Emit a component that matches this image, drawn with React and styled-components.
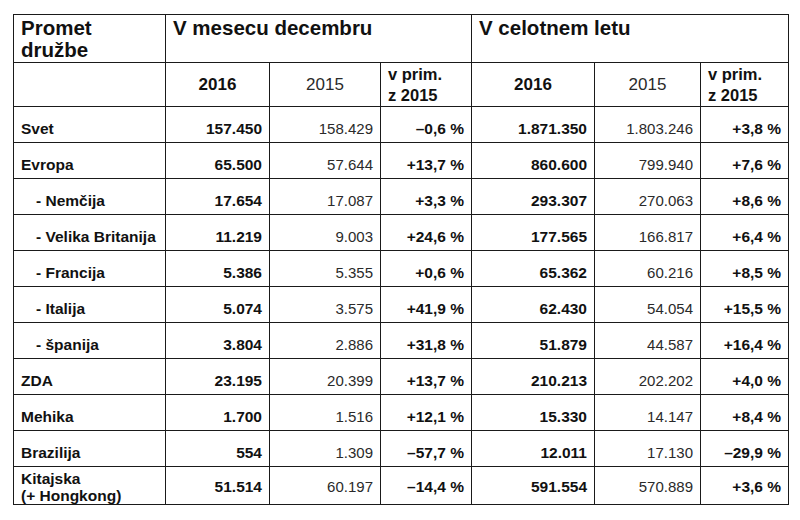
import React from 'react';
import styled, { createGlobalStyle } from 'styled-components';

const GlobalStyle = createGlobalStyle`
  html, body {
    margin: 0;
    background: #ffffff;
  }
  body {
    font-family: 'Liberation Sans', Arial, sans-serif;
    color: #111111;
  }
`;

const Page = styled.div`
  width: 800px;
  height: 520px;
  padding: 14px 0 0 13px;
  box-sizing: border-box;
`;

const Table = styled.table`
  width: 775px;
  border-collapse: collapse;
  table-layout: fixed;
  border: 1.5px solid #1a1a1a;
`;

const Cell = styled.td`
  border: 1px solid #1a1a1a;
  padding: ${({ $tight }) => ($tight ? '2px 7px 0 7px' : '8px 7px 0 7px')};
  padding-left: ${({ $indent }) => ($indent ? '22px' : '7px')};
  text-align: ${({ $align }) => $align || 'right'};
  vertical-align: middle;
  font-size: ${({ $bold }) => ($bold ? '15.5px' : '15px')};
  font-weight: ${({ $bold }) => ($bold ? 700 : 400)};
  color: ${({ $bold }) => ($bold ? '#111111' : '#2a2a2a')};
  line-height: 17px;
  white-space: nowrap;
`;

const TitleCell = styled.th`
  border: 1px solid #1a1a1a;
  padding: 2px 7px 0 7px;
  text-align: left;
  vertical-align: top;
  font-size: 20.5px;
  font-weight: 700;
  line-height: 22px;
  color: #111111;
`;

const YearCell = styled.th`
  border: 1px solid #1a1a1a;
  padding: 0 7px;
  text-align: ${({ $align }) => $align || 'center'};
  vertical-align: middle;
  font-size: ${({ $small }) => ($small ? '16.5px' : '17px')};
  font-weight: ${({ $bold }) => ($bold ? 700 : 400)};
  color: ${({ $bold }) => ($bold ? '#111111' : '#2a2a2a')};
  line-height: 21px;
`;

const TitleRow = styled.tr`
  height: 48px;
`;

const YearRow = styled.tr`
  height: 44px;
`;

const DataRow = styled.tr`
  height: ${({ $tall }) => ($tall ? '38px' : '36px')};
`;

const widths = [152, 104, 111, 91, 123, 106, 88];

const rows = [
  { label: 'Svet', m: ['157.450', '158.429', '–0,6 %'], y: ['1.871.350', '1.803.246', '+3,8 %'] },
  { label: 'Evropa', m: ['65.500', '57.644', '+13,7 %'], y: ['860.600', '799.940', '+7,6 %'] },
  { label: '- Nemčija', sub: true, m: ['17.654', '17.087', '+3,3 %'], y: ['293.307', '270.063', '+8,6 %'] },
  { label: '- Velika Britanija', sub: true, m: ['11.219', '9.003', '+24,6 %'], y: ['177.565', '166.817', '+6,4 %'] },
  { label: '- Francija', sub: true, m: ['5.386', '5.355', '+0,6 %'], y: ['65.362', '60.216', '+8,5 %'] },
  { label: '- Italija', sub: true, m: ['5.074', '3.575', '+41,9 %'], y: ['62.430', '54.054', '+15,5 %'] },
  { label: '- španija', sub: true, m: ['3.804', '2.886', '+31,8 %'], y: ['51.879', '44.587', '+16,4 %'] },
  { label: 'ZDA', m: ['23.195', '20.399', '+13,7 %'], y: ['210.213', '202.202', '+4,0 %'] },
  { label: 'Mehika', m: ['1.700', '1.516', '+12,1 %'], y: ['15.330', '14.147', '+8,4 %'] },
  { label: 'Brazilija', m: ['554', '1.309', '–57,7 %'], y: ['12.011', '17.130', '–29,9 %'] },
  { label: ['Kitajska', '(+ Hongkong)'], tall: true, m: ['51.514', '60.197', '–14,4 %'], y: ['591.554', '570.889', '+3,6 %'] },
];

const Values = ({ values, tight }) =>
  values.map((value, i) => (
    <Cell key={i} $bold={i !== 1} $tight={tight}>
      {value}
    </Cell>
  ));

const App = () => (
  <Page>
    <GlobalStyle />
    <Table>
      <colgroup>
        {widths.map((w, i) => (
          <col key={i} style={{ width: w }} />
        ))}
      </colgroup>
      <thead>
        <TitleRow>
          <TitleCell>
            Promet
            <br />
            družbe
          </TitleCell>
          <TitleCell colSpan={3}>V mesecu decembru</TitleCell>
          <TitleCell colSpan={3}>V celotnem letu</TitleCell>
        </TitleRow>
        <YearRow>
          <YearCell />
          <YearCell $bold>2016</YearCell>
          <YearCell>2015</YearCell>
          <YearCell $bold $small $align="left">
            v prim.
            <br />z 2015
          </YearCell>
          <YearCell $bold>2016</YearCell>
          <YearCell>2015</YearCell>
          <YearCell $bold $small $align="left">
            v prim.
            <br />z 2015
          </YearCell>
        </YearRow>
      </thead>
      <tbody>
        {rows.map((row, i) => (
          <DataRow key={i} $tall={row.tall}>
            <Cell $bold $align="left" $indent={row.sub} $tight={row.tall}>
              {Array.isArray(row.label) ? (
                <>
                  {row.label[0]}
                  <br />
                  {row.label[1]}
                </>
              ) : (
                row.label
              )}
            </Cell>
            <Values values={row.m} tight={row.tall} />
            <Values values={row.y} tight={row.tall} />
          </DataRow>
        ))}
      </tbody>
    </Table>
  </Page>
);

export default App;
